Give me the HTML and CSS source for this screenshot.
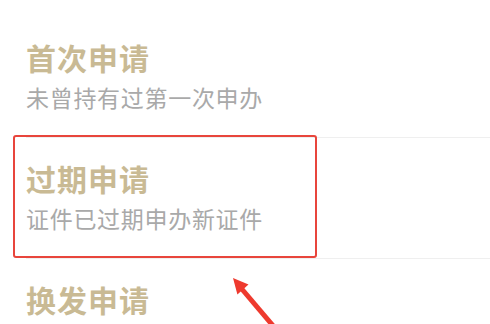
FILE: index.html
```html
<!DOCTYPE html>
<html lang="zh-CN">
<head>
<meta charset="utf-8">
<link rel="stylesheet" href="styles.css">
</head>
<body>
<div class="page">
  <ul class="list">
    <li class="item">
      <div class="title">首次申请</div>
      <div class="desc">未曾持有过第一次申办</div>
    </li>
    <li class="item">
      <div class="title">过期申请</div>
      <div class="desc">证件已过期申办新证件</div>
    </li>
    <li class="item">
      <div class="title">换发申请</div>
    </li>
  </ul>
  <div class="highlight"></div>
  <svg class="arrow" width="490" height="324" viewBox="0 0 490 324">
    <line x1="241" y1="288" x2="280" y2="334" stroke="#ee3a2e" stroke-width="5"/>
    <polygon points="233,278 237.4,294.5 248.5,284.5" fill="#ee3a2e"/>
  </svg>
</div>
</body>
</html>
```
FILE: styles.css
```css
html, body {
  margin: 0;
  padding: 0;
  background: #ffffff;
}
.page {
  position: relative;
  width: 490px;
  height: 324px;
  overflow: hidden;
  font-family: "Noto Sans CJK SC", "Noto Sans", sans-serif;
}
.list {
  list-style: none;
  margin: 0;
  padding: 17px 0 0 0;
}
.item {
  margin-left: 26px;
  padding: 20px 0;
  border-bottom: 1px solid #efefef;
}
.title {
  font-size: 30px;
  line-height: 40px;
  font-weight: 700;
  letter-spacing: 1px;
  color: #c9ba94;
}
.desc {
  font-size: 23px;
  line-height: 40px;
  letter-spacing: 0.7px;
  color: #a9a9a9;
}
.highlight {
  position: absolute;
  left: 13px;
  top: 135px;
  width: 300px;
  height: 119px;
  border: 2px solid #e8453c;
  border-radius: 3px;
}
.arrow {
  position: absolute;
  left: 0;
  top: 0;
}
```
